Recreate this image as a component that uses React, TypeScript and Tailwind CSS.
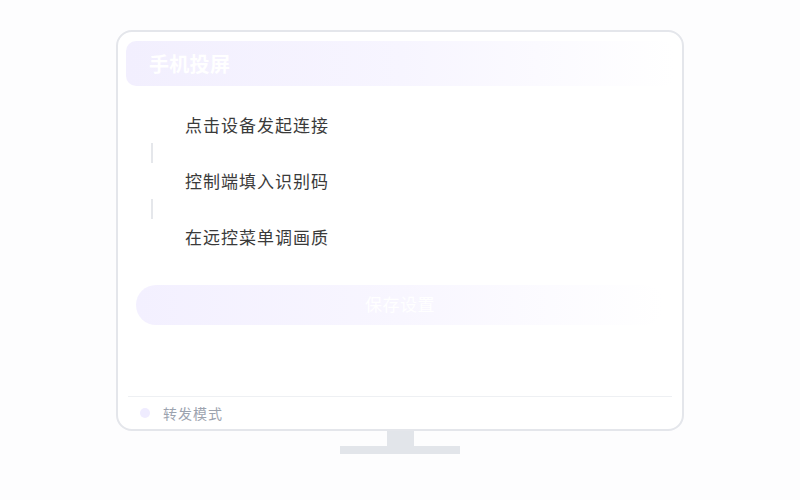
const steps = ['点击设备发起连接', '控制端填入识别码', '在远控菜单调画质'];

export default function App() {
  return (
    <div
      className="flex h-[500px] w-[800px] flex-col items-center bg-[#fdfdfe] pt-[30px]"
      style={{ fontFamily: '"Noto Sans CJK SC", "Noto Sans", sans-serif' }}
    >
      <div className="flex h-[401px] w-[568px] flex-col rounded-[16px] border-2 border-[#e4e6eb] bg-white px-[8px] pt-[9px]">
        <div className="flex h-[45px] items-center rounded-[10px] bg-gradient-to-r from-[#f2effe] via-[#f7f5ff] to-transparent pl-[23px]">
          <span className="text-[20px] font-bold tracking-[0.3px] text-white">手机投屏</span>
        </div>

        <div className="mt-[21px] flex flex-col pl-[25px]">
          {steps.map((s, i) => (
            <div key={s} className="flex flex-col">
              {i > 0 && <div className="h-[20px] w-[2px] bg-[#e5e7eb]" />}
              <div className="flex h-[36px] items-center">
                <span className="ml-[34px] text-[17px] tracking-[1px] text-[#3a3a3a]">{s}</span>
              </div>
            </div>
          ))}
        </div>

        <button className="mx-[10px] mt-[30px] flex h-[40px] items-center justify-center rounded-full bg-gradient-to-r from-[#f3f0ff] via-[#f8f6ff] to-transparent pb-[3px] text-[17px] tracking-[0.5px] text-white">
          保存设置
        </button>

        <div className="flex-1" />

        <div className="mx-[2px] flex h-[33px] items-center border-t border-[#eef0f3] pl-[12px]">
          <span className="h-[10px] w-[10px] rounded-full bg-[#efecff]" />
          <span className="ml-[13px] text-[14px] tracking-[1px] text-[#9ca3af]">转发模式</span>
        </div>
      </div>
      <div className="h-[15px] w-[27px] bg-[#e2e5ea]" />
      <div className="h-[8px] w-[120px] bg-[#e2e5ea]" />
    </div>
  );
}
